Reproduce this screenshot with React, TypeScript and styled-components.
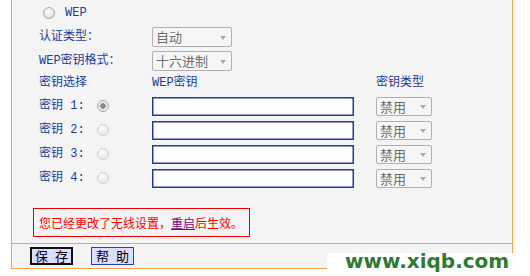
import React from "react";
import styled, { createGlobalStyle } from "styled-components";

const GlobalStyle = createGlobalStyle`
	html, body {
		margin: 0;
		padding: 0;
		background: #ffffff;
	}
	body {
		font-family: "Liberation Mono", "Noto Sans CJK SC", monospace;
		font-size: 12px;
	}
`;

const ORANGE = "#f4a24e";
const BLUE = "#1a3c9c";

const Page = styled.div`
	position: relative;
	width: 530px;
	height: 276px;
	overflow: hidden;
	background: #ffffff;
`;

const Panel = styled.div`
	margin-left: 11px;
	width: 500px;
	border-left: 1px solid ${ORANGE};
	border-right: 1px solid ${ORANGE};
	border-bottom: 1px solid ${ORANGE};
	background: #f4f4f4;
`;

const Form = styled.div`
	height: 243px;
	padding-left: 27px;
	box-sizing: border-box;
	display: flex;
	flex-direction: column;
`;

const Label = styled.span`
	color: ${BLUE};
	white-space: pre;
	line-height: 14px;
`;

const ModeRow = styled.div`
	height: 24px;
	display: flex;
	align-items: center;
	padding-left: 4px;
	gap: 10px;
	padding-top: 1px;
	box-sizing: border-box;
`;

const FieldRow = styled.div`
	height: 24px;
	display: grid;
	grid-template-columns: 113px 80px;
	align-items: center;
	padding-top: 2px;
	box-sizing: border-box;
`;

const KeyGrid = styled.div<{ $h: number }>`
	height: ${(p) => p.$h}px;
	display: grid;
	grid-template-columns: 58px 55px 224px 56px;
	align-items: center;
`;

const Radio = styled.span<{ $checked?: boolean; $dim?: boolean }>`
	display: inline-block;
	width: 12px;
	height: 12px;
	box-sizing: border-box;
	border-radius: 50%;
	border: 1px solid ${(p) => (p.$dim ? "#d2d2d2" : "#a8a8a8")};
	background: ${(p) =>
		p.$checked
			? "radial-gradient(circle, #8a8a8a 0 2.5px, #e6e6e6 3px, #f2f2f2 100%)"
			: p.$dim
			? "radial-gradient(circle at 40% 35%, #fbfbfb, #e4e4e4)"
			: "radial-gradient(circle at 40% 35%, #ffffff, #d4d4d4)"};
`;

const Select = styled.div<{ $w: number; $h: number }>`
	position: relative;
	width: ${(p) => p.$w}px;
	height: ${(p) => p.$h}px;
	box-sizing: border-box;
	border: 1px solid #b0b0b0;
	border-radius: 2px;
	background: #f6f6f6;
	color: #6e6e6e;
	font-family: "Noto Sans CJK SC", sans-serif;
	font-size: 13px;
	line-height: ${(p) => p.$h - 2}px;
	padding-left: 3px;
	&::after {
		content: "";
		position: absolute;
		right: 5px;
		top: 50%;
		margin-top: -1px;
		border-left: 3.5px solid transparent;
		border-right: 3.5px solid transparent;
		border-top: 4px solid #a8a8a8;
	}
`;

const KeyInput = styled.input`
	width: 202px;
	height: 19px;
	box-sizing: border-box;
	border: 1px solid #1c3ea0;
	box-shadow: inset 0 0 0 0.5px #1c3ea0;
	background: #ffffff;
	padding: 0 2px;
	margin: 0;
	outline: none;
`;

const Notice = styled.div`
	margin-top: 18px;
	margin-left: -6px;
	width: 217px;
	height: 29px;
	box-sizing: border-box;
	border: 1px solid #ee0000;
	color: #ff0000;
	font-family: "Noto Sans CJK SC", sans-serif;
	font-size: 12px;
	line-height: 27px;
	padding-left: 5px;
	white-space: nowrap;
	a {
		color: #800080;
		text-decoration: underline;
	}
`;

const ButtonBar = styled.div`
	height: 25px;
	border-top: 1px solid ${ORANGE};
	display: flex;
	gap: 18px;
	padding: 3px 0 0 18px;
	box-sizing: border-box;
`;

const Button = styled.button<{ $primary?: boolean }>`
	width: 43px;
	height: 18px;
	box-sizing: border-box;
	margin: 0;
	padding: 0;
	background: #dcdcfc;
	border: ${(p) => (p.$primary ? "2px solid #111111" : "1px solid #2544a8")};
	color: #000000;
	font-family: "Noto Sans CJK SC", sans-serif;
	font-size: 13px;
	line-height: 14px;
	word-spacing: 4px;
	white-space: pre;
`;

const Watermark = styled.div`
	position: absolute;
	left: 327px;
	top: 253px;
	width: 203px;
	background: #ffffff;
	color: #2f7a32;
	font-family: "DejaVu Sans", sans-serif;
	font-weight: bold;
	font-size: 20px;
	line-height: 17px;
	padding: 0 0 6px 18px;
	box-sizing: border-box;
	white-space: nowrap;
`;

const keys = [1, 2, 3, 4];

const App = () => {
	return (
		<Page>
			<GlobalStyle />
			<Panel>
				<Form>
					<ModeRow>
						<Radio />
						<Label>WEP</Label>
					</ModeRow>
					<FieldRow>
						<Label>认证类型：</Label>
						<Select $w={80} $h={20}>自动</Select>
					</FieldRow>
					<FieldRow>
						<Label>WEP密钥格式：</Label>
						<Select $w={80} $h={20}>十六进制</Select>
					</FieldRow>
					<KeyGrid $h={22}>
						<Label style={{ gridColumn: "span 2" }}>密钥选择</Label>
						<Label>WEP密钥</Label>
						<Label>密钥类型</Label>
					</KeyGrid>
					{keys.map((k) => (
						<KeyGrid $h={24} key={"key_" + k}>
							<Label>{"密钥 " + k + ":"}</Label>
							<Radio $checked={k === 1} $dim={k !== 1} />
							<KeyInput type="text" />
							<Select $w={56} $h={19}>禁用</Select>
						</KeyGrid>
					))}
					<Notice>
						您已经更改了无线设置，<a>重启</a>后生效。
					</Notice>
				</Form>
				<ButtonBar>
					<Button $primary>保 存</Button>
					<Button>帮 助</Button>
				</ButtonBar>
			</Panel>
			<Watermark>www.xiqb.com</Watermark>
		</Page>
	);
};

export default App;
